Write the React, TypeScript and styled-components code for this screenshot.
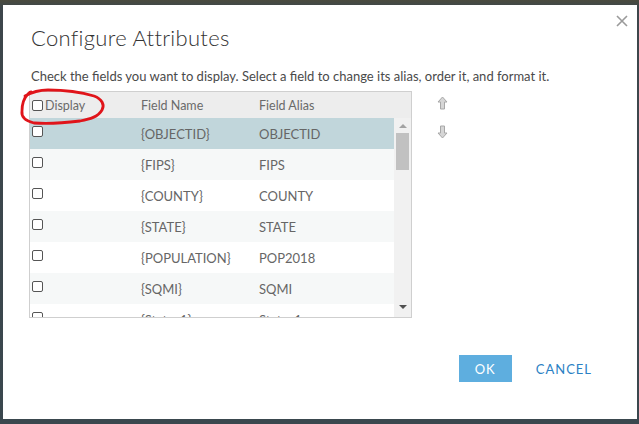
import React from "react";
import styled, { createGlobalStyle } from "styled-components";

const Global = createGlobalStyle`
  html, body { margin: 0; padding: 0; }
  body {
    width: 639px;
    height: 424px;
    overflow: hidden;
    background: linear-gradient(180deg, #4a4b3e 0px, #3d464b 8px, #3a474e 100%);
    font-family: "Lato", "Open Sans", sans-serif;
  }
`;

const Backdrop = styled.div`
  width: 639px;
  height: 424px;
  padding: 5px 2px 5px 3px;
  box-sizing: border-box;
`;

const Dialog = styled.div`
  position: relative;
  width: 634px;
  height: 414px;
  background: #fff;
  box-sizing: border-box;
  padding: 19px 0 0 28px;
  display: flex;
  flex-direction: column;
`;

const Title = styled.h1`
  margin: 0;
  font-family: "Lato", sans-serif;
  font-weight: 300;
  font-size: 22px;
  line-height: 28px;
  color: #333;
  letter-spacing: 0.3px;
`;

const CloseButton = styled.button`
  position: absolute;
  top: 7px;
  right: 6px;
  width: 18px;
  height: 18px;
  padding: 0;
  border: none;
  background: none;
  display: flex;
  align-items: center;
  justify-content: center;
`;

const Description = styled.p`
  margin: 16px 0 0 0;
  font-size: 13px;
  line-height: 16px;
  color: #4a4a4a;
`;

const Body = styled.div`
  display: flex;
  align-items: flex-start;
  margin-top: 7px;
  gap: 25px;
`;

const TableBox = styled.div`
  position: relative;
  width: 383px;
  height: 227px;
  margin-left: -2px;
  border: 1px solid #cfcfcf;
  box-sizing: border-box;
  display: flex;
  flex-direction: column;
  overflow: hidden;
`;

const HeaderRow = styled.div`
  display: grid;
  grid-template-columns: 111px 118px 1fr;
  height: 26px;
  align-items: center;
  background: #ededed;
  flex: none;
`;

const HeaderCell = styled.div<{ $pad?: number }>`
  display: flex;
  align-items: center;
  font-size: 12.5px;
  color: #6a6a6a;
  padding-left: ${(p) => p.$pad ?? 0}px;
  gap: 2px;
`;

const BodyArea = styled.div`
  display: flex;
  flex: 1;
  min-height: 0;
`;

const Rows = styled.div`
  flex: 1;
  display: flex;
  flex-direction: column;
  overflow: hidden;
`;

const Row = styled.div<{ $bg: string }>`
  display: grid;
  grid-template-columns: 111px 118px 1fr;
  height: 31px;
  flex: none;
  align-items: center;
  background: ${(p) => p.$bg};
  font-size: 13px;
  color: #666;
`;

const Cell = styled.div`
  white-space: nowrap;
`;

const CheckCell = styled.div`
  padding-left: 2px;
  display: flex;
  align-items: center;
`;

const Check = styled.span<{ $mt?: number }>`
  display: inline-block;
  width: 9px;
  height: 9px;
  border: 1px solid #555;
  border-radius: 2px;
  background: #fff;
  margin-top: ${(p) => p.$mt ?? -4}px;
`;

const Scrollbar = styled.div`
  width: 17px;
  background: #f1f1f1;
  display: flex;
  flex-direction: column;
  align-items: center;
  flex: none;
`;

const ScrollArrow = styled.div<{ $down?: boolean; $color: string }>`
  width: 0;
  height: 0;
  border-left: 4px solid transparent;
  border-right: 4px solid transparent;
  ${(p) =>
    p.$down
      ? `border-top: 4px solid ${p.$color};`
      : `border-bottom: 4px solid ${p.$color};`}
`;

const ScrollGap = styled.div<{ $h: number }>`
  height: ${(p) => p.$h}px;
  flex: none;
`;

const Thumb = styled.div`
  width: 13px;
  height: 37px;
  background: #c1c1c1;
  margin-top: 5px;
`;

const Spacer = styled.div`
  flex: 1;
`;

const MoveColumn = styled.div`
  display: flex;
  flex-direction: column;
  align-items: center;
  gap: 15px;
  padding-top: 5px;
`;

const Footer = styled.div`
  display: flex;
  justify-content: flex-end;
  align-items: center;
  margin-top: 37px;
  padding-right: 33px;
  gap: 12px;
`;

const OkButton = styled.button`
  width: 53px;
  height: 27px;
  border: none;
  background: #5eaedf;
  color: #fff;
  font-family: "Lato", sans-serif;
  font-size: 13px;
  letter-spacing: 1px;
  padding: 0;
`;

const CancelButton = styled.button`
  border: none;
  background: none;
  color: #2b81c4;
  font-family: "Lato", sans-serif;
  font-size: 13px;
  letter-spacing: 1px;
  padding: 0 12px;
  height: 27px;
`;

const Annotation = styled.svg`
  position: absolute;
  left: 15px;
  top: 81px;
  pointer-events: none;
`;

const MoveIcon = styled.svg<{ $down?: boolean }>`
  transform: ${(p) => (p.$down ? "rotate(180deg)" : "none")};
`;

const MoveArrow = ({ down }: { down?: boolean }) => (
  <MoveIcon $down={down} width="11" height="14" viewBox="0 0 11 14">
    <path
      d="M5.5 1 L10 6 L7.5 6 L7.5 13 L3.5 13 L3.5 6 L1 6 Z"
      fill="#d6d6d6"
      stroke="#a8a8a8"
      strokeWidth="1"
      strokeLinejoin="round"
    />
  </MoveIcon>
);

const rows = [
  { name: "{OBJECTID}", alias: "OBJECTID", bg: "#c1d6db" },
  { name: "{FIPS}", alias: "FIPS", bg: "#f6f8f8" },
  { name: "{COUNTY}", alias: "COUNTY", bg: "#ffffff" },
  { name: "{STATE}", alias: "STATE", bg: "#f6f8f8" },
  { name: "{POPULATION}", alias: "POP2018", bg: "#ffffff" },
  { name: "{SQMI}", alias: "SQMI", bg: "#f6f8f8" },
  { name: "{State_1}", alias: "State_1", bg: "#ffffff" },
];

export default function App() {
  return (
    <>
      <Global />
      <Backdrop>
        <Dialog>
          <Title>Configure Attributes</Title>
          <CloseButton aria-label="close">
            <svg width="12" height="12" viewBox="0 0 12 12">
              <path d="M1 1 L11 11 M11 1 L1 11" stroke="#9a9a9a" strokeWidth="1.6" />
            </svg>
          </CloseButton>
          <Description>
            Check the fields you want to display. Select a field to change its alias, order it, and format it.
          </Description>
          <Body>
            <TableBox>
              <HeaderRow>
                <HeaderCell $pad={2}>
                  <Check $mt={1} />
                  <span>Display</span>
                </HeaderCell>
                <HeaderCell>Field Name</HeaderCell>
                <HeaderCell>Field Alias</HeaderCell>
              </HeaderRow>
              <BodyArea>
                <Rows>
                  {rows.map((r) => (
                    <Row key={r.name} $bg={r.bg}>
                      <CheckCell>
                        <Check />
                      </CheckCell>
                      <Cell>{r.name}</Cell>
                      <Cell>{r.alias}</Cell>
                    </Row>
                  ))}
                </Rows>
                <Scrollbar>
                  <ScrollGap $h={6} />
                  <ScrollArrow $color="#a3a3a3" />
                  <Thumb />
                  <Spacer />
                  <ScrollArrow $down $color="#505050" />
                  <ScrollGap $h={8} />
                </Scrollbar>
              </BodyArea>
            </TableBox>
            <MoveColumn>
              <MoveArrow />
              <MoveArrow down />
            </MoveColumn>
          </Body>
          <Footer>
            <OkButton>OK</OkButton>
            <CancelButton>CANCEL</CancelButton>
          </Footer>
          <Annotation width="92" height="44" viewBox="0 0 92 44">
            <path
              d="M7 10 C 14 6, 22 4, 30 4 C 50 4, 66 7, 76 10 C 84 13, 87 19, 84 24 C 80 31, 72 33, 62 35 C 46 37, 28 38, 16 37 C 8 35, 3 31, 4 25 C 4 17, 6 12, 10 8 C 11 7, 12 6, 13 6"
              fill="none"
              stroke="#e0141a"
              strokeWidth="2.8"
              strokeLinecap="round"
            />
          </Annotation>
        </Dialog>
      </Backdrop>
    </>
  );
}
